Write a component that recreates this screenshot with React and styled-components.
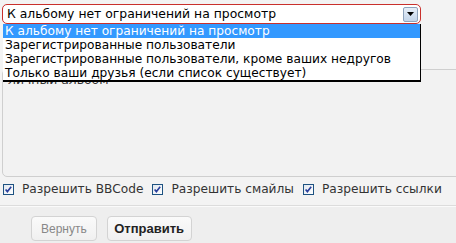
import React from "react";
import styled, { createGlobalStyle } from "styled-components";

const Global = createGlobalStyle`
  html, body { margin: 0; padding: 0; }
  body { background: #eeeeee; font-family: "DejaVu Sans", Verdana, sans-serif; }
  #root { width: 456px; height: 243px; overflow: hidden; }
`;

const Page = styled.div`
  width: 456px;
  height: 243px;
  display: flex;
  flex-direction: column;
  overflow: hidden;
`;

const Form = styled.div`
  background: #f3f3f3;
  padding: 4px 0 0 2px;
  display: flex;
  flex-direction: column;
  border-bottom: 1px solid #dcdcdc;
  height: 206px;
  box-sizing: border-box;
  flex-shrink: 0;
`;

const SelectWrap = styled.div`
  position: relative;
  width: 419px;
`;

const Select = styled.div`
  height: 20px;
  box-sizing: border-box;
  border: 1px solid #c9302c;
  border-radius: 5px;
  background: #fff;
  display: flex;
  align-items: center;
  justify-content: space-between;
  padding: 0 2px 0 4px;
  font-size: 12.4px;
  color: #000;
`;

const SelectText = styled.span`
  line-height: 14px;
`;

const ArrowBtn = styled.span`
  width: 15px;
  height: 15px;
  box-sizing: border-box;
  border: 1px solid #8fa4bd;
  border-radius: 2px;
  background: linear-gradient(#e6eef8, #c3d5ea);
  display: flex;
  align-items: center;
  justify-content: center;
`;

const List = styled.ul`
  position: absolute;
  left: 1px;
  top: 20px;
  width: 418px;
  box-sizing: border-box;
  margin: 0;
  padding: 0;
  list-style: none;
  background: #fff;
  border-right: 1px solid #000;
  border-bottom: 2px solid #000;
  z-index: 5;
`;

const Item = styled.li`
  height: 14px;
  line-height: 14px;
  font-size: 12.2px;
  padding-left: 2px;
  white-space: nowrap;
  color: ${(p) => (p.$active ? "#fff" : "#000")};
  background: ${(p) => (p.$active ? "#3399ff" : "transparent")};
`;

const TextArea = styled.div`
  margin-top: 45px;
  width: 470px;
  height: 108px;
  box-sizing: border-box;
  border: 1px solid #cfcfcf;
  border-radius: 5px;
  background: #f2f2f2;
  padding: 3px 0 0 5px;
  font-size: 12.4px;
  line-height: 14px;
  color: #333;
`;

const Options = styled.div`
  display: flex;
  align-items: center;
  gap: 9px;
  margin-top: 5px;
  padding-left: 1px;
`;

const Opt = styled.label`
  display: flex;
  align-items: center;
  gap: 8px;
  font-size: 12.2px;
  color: #333;
`;

const Footer = styled.div`
  flex: 1;
  background: #eeeeee;
  border-top: 1px solid #fafafa;
  display: flex;
  gap: 10px;
  padding: 9px 0 0 31px;
`;

const Button = styled.button`
  height: 25px;
  box-sizing: border-box;
  border: 1px solid #d3d3d3;
  border-radius: 4px;
  background: linear-gradient(#fafafa, #f0f0f0);
  font-family: "Liberation Sans", Arial, sans-serif;
  font-size: ${(p) => (p.$primary ? "13px" : "12px")};
  font-weight: ${(p) => (p.$primary ? "bold" : "normal")};
  color: ${(p) => (p.$primary ? "#222" : "#888")};
  padding: 0 ${(p) => (p.$primary ? "6.5px" : "9px")};
`;

const Check = () => (
  <svg width="11" height="11" viewBox="0 0 11 11">
    <defs>
      <linearGradient id="cb" x1="0" y1="0" x2="1" y2="1">
        <stop offset="0" stopColor="#dfe6ee" />
        <stop offset="1" stopColor="#ffffff" />
      </linearGradient>
    </defs>
    <rect x="0.5" y="0.5" width="10" height="10" fill="url(#cb)" stroke="#1d5281" />
    <path d="M2.6 5.4 L4.4 7.6 L8.2 2.8" fill="none" stroke="#2a3f9c" strokeWidth="1.6" />
  </svg>
);

const items = [
  "К альбому нет ограничений на просмотр",
  "Зарегистрированные пользователи",
  "Зарегистрированные пользователи, кроме ваших недругов",
  "Только ваши друзья (если список существует)",
];

export default function App() {
  return (
    <Page>
      <Global />
      <Form>
        <SelectWrap>
          <Select>
            <SelectText>{items[0]}</SelectText>
            <ArrowBtn>
              <svg width="7" height="4" viewBox="0 0 7 4">
                <path d="M0 0 H7 L3.5 4 Z" fill="#000" />
              </svg>
            </ArrowBtn>
          </Select>
          <List>
            {items.map((t, i) => (
              <Item key={t} $active={i === 0}>{t}</Item>
            ))}
          </List>
        </SelectWrap>
        <TextArea>личный альбом</TextArea>
        <Options>
          <Opt><Check />Разрешить BBCode</Opt>
          <Opt><Check />Разрешить смайлы</Opt>
          <Opt><Check />Разрешить ссылки</Opt>
        </Options>
      </Form>
      <Footer>
        <Button>Вернуть</Button>
        <Button $primary>Отправить</Button>
      </Footer>
    </Page>
  );
}
